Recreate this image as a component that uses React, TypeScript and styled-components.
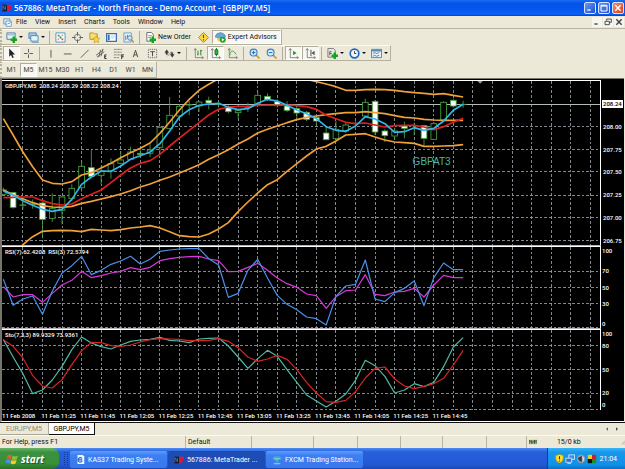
import React from "react";
import styled, { createGlobalStyle, css } from "styled-components";

const GlobalStyle = createGlobalStyle`
  * { box-sizing: border-box; }
  body { margin: 0; background: #ece9d8; font-family: Roboto, "Liberation Sans", sans-serif; font-size: 7px; line-height: 8px; color: #111; }
  button { font: inherit; color: inherit; }
`;

/* ---------- window frame ---------- */

const Shell = styled.div`
  display: flex;
  flex-direction: column;
  height: 100vh;
  min-height: 320px;
  overflow: hidden;
`;

const TitleBar = styled.header`
  display: flex;
  align-items: center;
  flex: none;
  height: 16px;
  padding: 0 1px 0 2px;
  gap: 2px;
  background: linear-gradient(#1c6cf4 0, #0353e6 20%, #0456ec 60%, #0862fc 88%, #0340c0 100%);
`;

const Title = styled.h1`
  flex: 1;
  margin: 0;
  font: 600 8px/12px "Open Sans", sans-serif;
  color: #fff;
  white-space: nowrap;
  overflow: hidden;
`;

const CaptionButton = styled.button<{ $danger?: boolean }>`
  display: flex;
  width: 12px;
  height: 12px;
  padding: 1px;
  border: 1px solid #d6e4ff;
  border-radius: 2px;
  color: #fff;
  background: ${(p) => (p.$danger ? "linear-gradient(135deg, #f09070, #d8401c)" : "linear-gradient(135deg, #6c98f4, #1c50d4)")};
`;

const MenuBar = styled.nav`
  display: flex;
  align-items: center;
  flex: none;
  height: 13px;
  padding: 0 1px 0 3px;
  border-bottom: 1px solid #b8b5a4;
`;

const MenuButton = styled.button`
  padding: 0 4px;
  border: 0;
  background: none;
`;

const Spacer = styled.div`
  flex: 1;
`;

const ChildButton = styled.button`
  display: flex;
  width: 10px;
  height: 10px;
  margin-left: 1px;
  padding: 1px;
  border: 0;
  color: #444;
  background: #f6f5ee;
`;

/* ---------- toolbars ---------- */

const Toolbar = styled.div<{ $last?: boolean }>`
  display: flex;
  align-items: center;
  align-self: flex-start;
  flex: none;
  height: ${(p) => (p.$last ? "17px" : "16px")};
  padding-left: 1px;
  border: 1px solid #fbfaf4;
  border-right-color: #b4b1a0;
  border-bottom-color: #b4b1a0;
  border-left: 2px dotted #b4b1a0;
`;

const ToolButton = styled.button<{ $on?: boolean; $menu?: boolean; $text?: boolean }>`
  display: flex;
  align-items: center;
  justify-content: center;
  flex: none;
  gap: 2px;
  width: ${(p) => (p.$text ? "auto" : p.$menu ? "22px" : "17px")};
  height: 14px;
  padding: ${(p) => (p.$text ? "0 3px 0 2px" : "0")};
  border: 1px solid transparent;
  background: none;
  white-space: nowrap;
  ${(p) =>
    p.$on &&
    css`
      border-color: #b0ad9c #fff #fff #b0ad9c;
      background: #f8f7f2;
    `}
`;

const Frame = styled(ToolButton)`
  color: #444;
`;

const Caret = styled.span`
  border: 2px solid transparent;
  border-top-color: #111;
  border-bottom: 0;
`;

const Rule = styled.span<{ $wide?: boolean }>`
  flex: none;
  width: 1px;
  height: 13px;
  margin: 0 ${(p) => (p.$wide ? "3px" : "2px")};
  background: #b0ad9c;
`;

/* ---------- chart window ---------- */

const ChartWindow = styled.main`
  display: grid;
  flex: 1;
  min-height: 0;
  grid-template-columns: minmax(0, 1fr) 23px;
  grid-template-rows: minmax(0, 166fr) minmax(0, 83fr) minmax(0, 81fr) 11px;
  margin-right: 1px;
  padding-top: 1px;
  border: solid #77756b;
  border-width: 1px 0 0 2px;
  border-bottom: 1px solid #fff;
  background: #000;
  color: #fff;
  font-size: 6px;
  font-weight: 500;
`;

const Pane = styled.section<{ $last?: boolean }>`
  position: relative;
  min-height: 0;
  border-top: 1px solid #fff;
  border-right: 1px solid #fff;
  border-bottom: ${(p) => (p.$last ? "0" : "1px solid #b8b0b8")};
  overflow: hidden;
`;

const Plot = styled.svg`
  display: block;
  width: 100%;
  height: 100%;
`;

const PaneTitle = styled.div`
  position: absolute;
  top: 1px;
  left: 3px;
  white-space: pre;
`;

const Annotation = styled.div`
  position: absolute;
  top: 46%;
  left: 69%;
  margin-left: -2px;
  font: 10px/12px "Liberation Sans", Arial, sans-serif;
  color: #48b8a4;
`;

const Scale = styled.div<{ $top?: number; $inset?: number }>`
  display: flex;
  flex-direction: column;
  min-height: 0;
  padding: ${(p) => p.$top ?? 1}px 0 1px ${(p) => p.$inset ?? 0}px;
`;

const ScaleLabel = styled.div<{ $gap: number }>`
  display: flex;
  align-items: flex-end;
  flex: ${(p) => p.$gap} 0 8px;
`;

const Mark = styled.span<{ $current?: boolean }>`
  padding: 0 1px;
  ${(p) => p.$current && css`background: #fff; color: #000;`}
`;

const TimeAxis = styled.div`
  display: grid;
  grid-template-columns: repeat(12, minmax(0, 39fr)) minmax(0, 129fr);
  grid-column: 1 / 2;
  line-height: 11px;
  white-space: nowrap;
`;

/* ---------- bottom bars ---------- */

const TabStrip = styled.div`
  display: flex;
  flex: none;
  height: 13px;
  border-top: 1px solid #111;
  padding-right: 3px;
`;

const Tab = styled.button<{ $active?: boolean }>`
  width: ${(p) => (p.$active ? "46px" : "49px")};
  padding: 0;
  border: 0;
  border-right: 1px solid ${(p) => (p.$active ? "#111" : "#aaa796")};
  border-bottom: 1px solid ${(p) => (p.$active ? "#111" : "#aaa796")};
  background: ${(p) => (p.$active ? "#fff" : "#ece9d8")};
  color: ${(p) => (p.$active ? "#000" : "#8c8a7c")};
`;

const TabArrow = styled.button`
  display: flex;
  align-items: center;
  width: 10px;
  padding: 0 3px;
  border: 0;
  background: none;
`;

const StatusBar = styled.footer`
  display: grid;
  flex: none;
  grid-template-columns: 185fr 66fr 62fr 44fr 43fr 42fr 44fr 40fr 99fr;
  height: 13px;
  border-top: 1px solid #fbfaf4;
  line-height: 12px;
`;

const StatusCell = styled.div`
  display: flex;
  align-items: center;
  min-width: 0;
  padding-left: 2px;
  gap: 20px;
  white-space: nowrap;
  & + & { border-left: 1px solid #b8b5a4; }
`;

const Taskbar = styled.div`
  display: flex;
  flex: none;
  height: 21px;
  gap: 1px;
  background: linear-gradient(#4c8cf4 0, #2860dc 18%, #2258d4 80%, #1c48b0 100%);
`;

const StartButton = styled.button`
  display: flex;
  align-items: center;
  width: 59px;
  padding: 0 0 0 6px;
  gap: 3px;
  border: 0;
  border-radius: 0 7px 7px 0;
  background: linear-gradient(#68b468 0, #3c9040 20%, #389038 75%, #287028 100%);
  color: #fff;
  font: italic bold 10px/14px "Open Sans", sans-serif;
  text-shadow: 1px 1px 1px #1c5020;
`;

const Grip = styled.span`
  width: 4px;
  margin: 4px 1px 4px 4px;
  border: dotted #143c9c;
  border-width: 0 1px;
`;

const Task = styled.button<{ $active?: boolean }>`
  display: flex;
  align-items: center;
  flex: 0 1 97px;
  min-width: 0;
  height: 17px;
  margin-top: 3px;
  padding: 0 4px 0 6px;
  gap: 3px;
  border: 0;
  border-radius: 2px;
  background: ${(p) => (p.$active ? "#1c4cb4" : "linear-gradient(#609cfc, #3c80f4 25%, #3878ec)")};
  color: #fff;
  white-space: nowrap;
`;

const Tray = styled.div`
  display: flex;
  align-items: center;
  width: 78px;
  padding: 0 8px 0 7px;
  gap: 1px;
  border-left: 1px solid #0c4094;
  background: linear-gradient(#38b4f8 0, #1898ec 20%, #1090e8 80%, #0c70c0 100%);
  color: #fff;
`;

const Glyph = styled.svg<{ $size?: number }>`
  flex: none;
  width: ${(p) => p.$size ?? 12}px;
  height: ${(p) => p.$size ?? 12}px;
`;

/* ---------- icons, all on a 12 unit grid ---------- */

const axes = <path d="M2.5 1v9.5H11M1 2.5l1.5-2 1.5 2M9.500 9l2 1.500-2 1.500" fill="none" stroke="#777" strokeWidth=".9" />;
const plus = <path d="M8.500 5v7M5 8.500h7" stroke="#18a020" strokeWidth="2.600" />;

const icons: Record<string, React.ReactNode> = {
  logo: (
    <>
      <path d="M0 2h6v8H0z" fill="#101828" />
      <path d="M1 9V3l3 5V3" stroke="#5878c8" fill="none" />
      <path d="M6 10V2h6v3H9v1h2v2H9v2z" fill="#d81840" />
    </>
  ),
  windows: (
    <>
      <path d="M1 1h8v7H1z" fill="#d8ecfc" stroke="#4888c0" />
      <path d="M4 4h7v7H4z" fill="#fff" stroke="#4888c0" />
      <path d="M5 9l2-2 1 1 2-3" stroke="#4888c0" fill="none" />
    </>
  ),
  newChart: (
    <>
      <path d="M1 1h9v7H1z" fill="#e4f0f8" stroke="#4c7ca4" />
      <path d="M2 3h7" stroke="#7cacd0" />
      {plus}
    </>
  ),
  profiles: (
    <>
      <path d="M1 1h8v6H1z" fill="#a8ccec" stroke="#4c80b0" />
      <path d="M3 4h8v6H3z" fill="#e8f4fc" stroke="#4c80b0" />
      <path d="M4 11.500h8" stroke="#7ca0c0" />
    </>
  ),
  market: (
    <>
      <path d="M1 1h10v10H1z" fill="#fff" stroke="#5090c4" />
      <path d="M3 3h2v2H3zM5 5h2v2H5z" fill="#20a040" />
      <path d="M7 7h2v2H7zM3 7h1v2H3z" fill="#e04830" />
      <path d="M7 3h2v1H7z" fill="#4888d8" />
    </>
  ),
  target: (
    <>
      <circle cx="6" cy="6" r="3.500" fill="none" stroke="#777" />
      <path d="M6 0v4M6 8v4M0 6h4M8 6h4" stroke="#555" />
    </>
  ),
  favorites: (
    <>
      <path d="M1 1h4l1 1h3v6H1z" fill="#f8e070" stroke="#c09020" />
      <path d="M8 4l1.200 2.600 2.800.3-2 2 .5 2.900L8 10.400 5.500 11.800l.5-2.900-2-2 2.800-.3z" fill="#fcd840" stroke="#b88810" strokeWidth=".6" />
    </>
  ),
  terminal: (
    <>
      <path d="M.7 1.700h10.600v8.600H.7z" fill="#fff" stroke="#3870b0" strokeWidth="1.400" />
      <path d="M2 3h2v6H2z" fill="#3870b0" />
      <path d="M5 4.500h5M5 6.500h4" stroke="#b4d0e8" />
    </>
  ),
  tester: (
    <>
      <path d="M1 1h8v10H1z" fill="#eef4fa" stroke="#6c98c0" />
      <path d="M3 9V4M5 7V3" stroke="#4878a8" />
      <circle cx="7.500" cy="6.500" r="2.500" fill="#c8e4f8" stroke="#4c80b0" />
      <path d="M9.500 8.500L12 11.500" stroke="#c09030" strokeWidth="1.600" />
    </>
  ),
  order: (
    <>
      <path d="M2 .5h5l2 2V10H2z" fill="#fff" stroke="#666" />
      <path d="M3.500 4h4M3.500 6h3" stroke="#888" />
      {plus}
    </>
  ),
  warning: (
    <>
      <path d="M6 .5L11.500 6 6 11.500.5 6z" fill="#f8d840" stroke="#b08c10" />
      <path d="M6 3v3.500M6 8v1.200" stroke="#705000" strokeWidth="1.200" />
    </>
  ),
  expert: (
    <>
      <path d="M2 6c0 5 4 5 6 4V5z" fill="#f0cc60" />
      <path d="M0 5.500q1-4.500 6-5 4 .5 6 4.500-2 2-6 1.500T0 5.500z" fill="#68a8d8" stroke="#4080b0" strokeWidth=".6" />
      <circle cx="8.500" cy="8.500" r="3.300" fill="#28a430" />
      <path d="M7.500 6.800v3.400L10.300 8.500z" fill="#fff" />
    </>
  ),
  cursor: <path d="M3.500.5v9l2-2 1.500 3.500 1.500-.7L7 7h3z" fill="#222" />,
  cross: <path d="M6 1v4M6 7v4M1 6h4M7 6h4" stroke="#555" fill="none" />,
  vline: <path d="M6.500 2v8.500" stroke="#555" />,
  hline: <path d="M2 6.500h8.500" stroke="#555" />,
  trend: <path d="M2 10.500L10.500 2" stroke="#555" />,
  channel: (
    <>
      <path d="M0 8l8-6M1 10l8-6M3 10l2-8M5.500 9l2-8" stroke="#555" fill="none" strokeWidth=".9" />
      <path d="M11.500 7.500H9.500v4h2M9.500 9.500h1.500" stroke="#222" fill="none" />
    </>
  ),
  fibo: (
    <>
      <path d="M1 1.500h9M1 4.500h9M1 7.500h9M1 10.500h6" stroke="#666" strokeDasharray="1 .5" />
      <path d="M9.500 12V7.500H12M9.500 9.500h2" stroke="#222" fill="none" />
    </>
  ),
  textA: <path d="M3.500 10L6 2.500 8.500 10M4.500 7.500h3" stroke="#444" fill="none" />,
  label: (
    <>
      <path d="M1.500 1.500h9v9h-9z" fill="none" stroke="#555" strokeDasharray="1 1" />
      <path d="M3.500 4h5M6 4v5" stroke="#444" fill="none" />
    </>
  ),
  arrows: <path d="M1 5l2-3 2 3H3.700v2H2.300V5zM7 7h1V5h1.500v2H11l-2 3zM4 9l4-5" fill="#333" stroke="#333" strokeWidth=".5" />,
  bars: (
    <>
      {axes}
      <path d="M5.500 3v5M4.500 7h1M8.500 2v6M8.500 3h1.500" stroke="#208020" fill="none" />
    </>
  ),
  candles: (
    <>
      {axes}
      <path d="M7 0v9" stroke="#107010" />
      <path d="M5.500 2h3v5h-3z" fill="#30b840" stroke="#107010" />
    </>
  ),
  line: (
    <>
      {axes}
      <path d="M3 8c1-6 4-6 7-1" stroke="#40a040" fill="none" />
    </>
  ),
  zoomIn: (
    <>
      <path d="M7.500 7.500l4 4" stroke="#d0a030" strokeWidth="2" />
      <circle cx="5" cy="5" r="3.800" fill="#d4ecfc" stroke="#3880c0" strokeWidth="1.200" />
      <path d="M5 3v4M3 5h4" stroke="#2060b0" />
    </>
  ),
  zoomOut: (
    <>
      <path d="M7.500 7.500l4 4" stroke="#d0a030" strokeWidth="2" />
      <circle cx="5" cy="5" r="3.800" fill="#d4ecfc" stroke="#3880c0" strokeWidth="1.200" />
      <path d="M3 5h4" stroke="#2060b0" />
    </>
  ),
  scroll: (
    <>
      {axes}
      <path d="M5.500 3v5l4-2.500z" fill="#20a030" />
    </>
  ),
  shift: (
    <>
      {axes}
      <path d="M6.500 2v7" stroke="#444" />
      <path d="M10.500 3v5L7 5.500z" fill="#555" />
    </>
  ),
  indicators: (
    <>
      <path d="M1 .5h6l2 2V10H1z" fill="#e8e8e4" stroke="#777" />
      <path d="M3 8V4h2M3 6h2" stroke="#555" fill="none" />
      {plus}
    </>
  ),
  clock: (
    <>
      <circle cx="6" cy="6" r="4.700" fill="#f4faff" stroke="#2068b8" strokeWidth="1.800" />
      <path d="M6 3.500V6h2" stroke="#333" fill="none" />
    </>
  ),
  template: (
    <>
      <path d="M.5 1.500h11v9H.5z" fill="#e8f2fa" stroke="#4c80ac" />
      <path d="M1 3h10" stroke="#4c80ac" strokeWidth="1.500" />
      <path d="M2 6l2-1 2 1 3-1M2 9l2-1 2 1 3-1" stroke="#5c7c94" fill="none" />
    </>
  ),
  minimize: <path d="M2 9h5" stroke="currentColor" strokeWidth="2" />,
  maximize: <path d="M1.500 2h9v8.500h-9zM1.500 3h9" stroke="currentColor" strokeWidth="1.500" fill="none" />,
  restore: <path d="M4 4V1.500h7v5H8M1.500 5h6.500v5H1.500z" stroke="currentColor" strokeWidth="1.400" fill="none" />,
  close: <path d="M2 2l8 8M10 2l-8 8" stroke="currentColor" strokeWidth="2.200" />,
  left: <path d="M9 1v10L3 6z" fill="#666" />,
  right: <path d="M3 1v10l6-5z" fill="#444" />,
  flag: (
    <>
      <path d="M1.500 2.500Q4 1 6 2.500L5 6Q3 4.500.5 6z" fill="#f05828" />
      <path d="M6.700 2.800Q9 4 11.800 2.800L10.800 6.300Q8 7.500 5.700 6.300z" fill="#80c838" />
      <path d="M.3 6.800Q3 5.500 4.800 6.800l-1 3.500Q2 9-.5 10.300z" fill="#4890f0" />
      <path d="M5.500 7Q8 8.200 10.600 7l-1 3.500Q7 12 4.500 10.500z" fill="#fcc828" />
    </>
  ),
  document: (
    <>
      <path d="M2 0h7l2 2v10H2z" fill="#f0f6ff" />
      <path d="M8 4.500a3 3 0 1 0 .3 3.500M2.500 6.500h6" stroke="#2060c8" strokeWidth="1.500" fill="none" />
    </>
  ),
  station: (
    <>
      <path d="M1 3q5-4 10 0v3H8v3H4V6H1z" fill="#40a8c8" />
      <path d="M2 10.500h8M3 4q3 2 6 0" stroke="#a8e8f0" fill="none" />
    </>
  ),
  shield: (
    <>
      <path d="M6 .5l5 1.500v4q0 4-5 6-5-2-5-6V2z" fill="#fce030" stroke="#b89410" />
      <path d="M6 3v4M6 8.500V10" stroke="#403000" strokeWidth="1.400" />
    </>
  ),
  network: (
    <>
      <path d="M4.500 1h7v5.500h-7z" fill="#4888e0" stroke="#dcecff" />
      <path d="M1 5h7v5H1z" fill="#3070d0" stroke="#dcecff" />
      <path d="M3 11.500h4" stroke="#dcecff" />
    </>
  ),
  volume: (
    <>
      <circle cx="6" cy="6" r="5" fill="#909ca8" />
      <path d="M2 5l5-3v8L4 8z" fill="#333c48" />
      <path d="M8 3q2 3 0 6" stroke="#fff" fill="none" />
    </>
  ),
  quad: (
    <>
      <path d="M1 1h5v5H1z" fill="#e8d020" />
      <path d="M6 1h5v5H6z" fill="#d02020" />
      <path d="M1 6h5v5H1z" fill="#101010" />
      <path d="M6 6h5v5H6z" fill="#189028" />
    </>
  ),
};

const Icon = ({ name, size }: { name: string; size?: number }) => (
  <Glyph viewBox="0 0 12 12" $size={size} aria-hidden="true">
    {icons[name]}
  </Glyph>
);

/* ---------- chart data: three drawing units per pixel, one sample per bar ---------- */

const STEP = 29.3;
const barX = (i: number) => 10 + i * STEP;

const upperBand = [128, 177, 228, 272, 312, 322, 324, 317, 297, 290, 276, 262, 245, 230, 217, 201, 172, 138, 102, 70, 43, 25, 8, 0, -5, -8, -10, -10, -8, -5, 0, 10, 17, 24, 32, 43, 43, 41, 40, 41, 43, 47, 50, 52, 55, 53, 58, 63];
const middleBand = [342, 356, 368, 380, 389, 393, 394, 391, 382, 376, 369, 362, 354, 344, 333, 324, 313, 303, 291, 279, 266, 250, 236, 221, 204, 189, 171, 160, 150, 140, 131, 124, 120, 116, 113, 110, 110, 107, 110, 113, 119, 124, 126, 130, 132, 133, 133, 133];
const lowerBand = [560, 535, 506, 482, 466, 464, 463, 464, 467, 460, 462, 464, 461, 456, 453, 449, 456, 467, 479, 482, 483, 474, 459, 440, 407, 378, 351, 326, 311, 286, 263, 240, 219, 211, 195, 177, 175, 173, 183, 192, 198, 200, 202, 211, 211, 210, 209, 206];
const fastAverage = [345, 358, 374, 388, 400, 406, 400, 370, 325, 303, 285, 286, 270, 250, 239, 228, 203, 165, 123, 101, 88, 84, 82, 94, 101, 98, 82, 70, 75, 88, 102, 113, 128, 152, 163, 166, 150, 122, 129, 143, 169, 167, 155, 163, 157, 135, 103, 85];
const slowAverage = [365, 364, 363, 363, 374, 383, 387, 384, 368, 355, 342, 320, 297, 276, 262, 254, 235, 210, 186, 163, 140, 117, 100, 93, 91, 91, 88, 87, 88, 87, 89, 92, 100, 118, 128, 139, 143, 141, 147, 153, 149, 148, 148, 153, 161, 152, 139, 127];
const rsiFast = [106, 184, 165, 156, 211, 142, 87, 65, 37, 92, 79, 61, 51, 37, 60, 46, 22, 18, 15, 14, 14, 44, 63, 160, 148, 79, 46, 102, 154, 181, 197, 219, 224, 243, 157, 126, 121, 48, 165, 173, 146, 133, 111, 185, 101, 57, 77, 77];
const rsiSlow = [128, 159, 152, 152, 175, 148, 123, 109, 82, 101, 95, 87, 82, 71, 77, 70, 50, 44, 40, 38, 37, 45, 50, 83, 82, 70, 58, 79, 102, 119, 130, 150, 155, 193, 158, 140, 138, 92, 151, 155, 144, 142, 133, 159, 123, 94, 101, 101];
const stoMain = [290, 342, 392, 452, 441, 411, 370, 320, 282, 300, 311, 318, 306, 295, 291, 289, 283, 292, 294, 299, 288, 286, 285, 309, 342, 376, 347, 322, 340, 380, 418, 456, 474, 492, 475, 453, 412, 352, 368, 400, 450, 441, 422, 431, 418, 371, 312, 284];
const stoSignal = [290, 310, 345, 398, 429, 435, 410, 365, 323, 298, 299, 308, 310, 306, 297, 290, 287, 288, 289, 293, 293, 292, 287, 295, 314, 342, 355, 348, 337, 349, 380, 418, 450, 476, 478, 472, 446, 405, 376, 372, 408, 429, 437, 430, 422, 406, 366, 322];

/* high, low, body top, body bottom, 1 for a falling bar */
const candles = [
  [335, 360, 342, 355, 0], [348, 398, 350, 394, 1], [372, 400, 387, 388, 0], [370, 398, 384, 385, 0],
  [378, 482, 381, 430, 1], [352, 438, 398, 427, 0], [360, 445, 363, 403, 0], [325, 375, 337, 367, 0],
  [252, 347, 271, 335, 0], [222, 303, 275, 301, 1], [268, 325, 285, 298, 0], [247, 308, 263, 285, 0],
  [225, 265, 252, 262, 0], [212, 252, 228, 250, 0], [215, 245, 232, 235, 1], [205, 243, 222, 232, 0],
  [150, 232, 154, 214, 0], [63, 160, 118, 158, 0], [85, 125, 91, 120, 0], [75, 118, 86, 87, 0],
  [75, 108, 78, 90, 0], [62, 100, 73, 81, 1], [75, 95, 84, 85, 0], [88, 112, 94, 107, 1],
  [98, 128, 104, 110, 0], [80, 108, 92, 94, 0], [45, 90, 58, 82, 0], [52, 75, 61, 71, 1],
  [70, 95, 77, 87, 1], [75, 108, 90, 103, 1], [90, 128, 98, 111, 1], [105, 135, 109, 130, 1],
  [118, 150, 125, 135, 1], [152, 193, 171, 191, 1], [135, 192, 160, 188, 0], [140, 170, 147, 165, 0],
  [135, 160, 142, 143, 0], [68, 125, 79, 120, 0], [72, 178, 76, 168, 1], [160, 198, 165, 179, 1],
  [155, 190, 165, 180, 0], [137, 187, 150, 157, 1], [140, 178, 148, 149, 0], [147, 208, 149, 187, 1],
  [138, 192, 143, 190, 0], [76, 137, 79, 132, 0], [68, 95, 73, 90, 1], [74, 95, 85, 86, 0],
];

const Series = ({ data, color, width = 3.6 }: { data: number[]; color: string; width?: number }) => (
  <polyline
    points={data.map((y, i) => `${barX(i).toFixed(1)},${y}`).join(" ")}
    fill="none"
    stroke={color}
    strokeWidth={width}
    strokeLinejoin="round"
  />
);

const Grid = ({ levels, top, bottom }: { levels: number[]; top: number; bottom: number }) => (
  <g stroke="#949ca4" strokeWidth="2.6" strokeDasharray="8 6" shapeRendering="crispEdges">
    {Array.from({ length: 30 }, (_, i) => {
      const x = 68.5 + i * STEP * 2;
      return <path key={i} d={`M${x} ${top}V${bottom}`} />;
    })}
    {levels.map((y) => (
      <path key={y} d={`M6 ${y}H1797`} />
    ))}
  </g>
);

const PricePlot = () => (
  <Plot viewBox="6 15 1791 492" preserveAspectRatio="none" role="img" aria-label="GBPJPY five minute candles">
    <Grid levels={[152.5, 220.5, 287.5, 357.5, 424.5, 493.5]} top={15} bottom={507} />
    <path d="M6 85.500H1797" stroke="#b4bcb8" strokeWidth="3" />
    {candles.map(([high, low, top, bottom, down], i) => (
      <g key={i} stroke="#48a040" strokeWidth="2.600">
        <path d={`M${barX(i)} ${high}V${top}M${barX(i)} ${bottom}V${low}`} />
        <rect x={barX(i) - 8.5} y={top} width={17} height={bottom - top} fill={down ? "#fff" : "#000"} />
      </g>
    ))}
    <path d="M1429 14h18l-9 9z" fill="#8898a4" />
    <Series data={upperBand} color="#f0a038" width={5} />
    <Series data={middleBand} color="#f0a038" width={5} />
    <Series data={lowerBand} color="#f0a038" width={5} />
    <Series data={slowAverage} color="#dc2020" width={5} />
    <Series data={fastAverage} color="#30b8ec" width={5} />
  </Plot>
);

const times = ["2008", "11:25", "11:45", "12:05", "12:25", "12:45", "13:05", "13:25", "13:45", "14:05", "14:25", "14:45"];

const Levels = ({ items }: { items: [string, number][] }) => (
  <Scale>
    {items.map(([text, gap]) => (
      <ScaleLabel key={text} $gap={gap}>
        <Mark>{text}</Mark>
      </ScaleLabel>
    ))}
  </Scale>
);

const Tool = ({ name, label, on, menu }: { name: string; label: string; on?: boolean; menu?: boolean }) => (
  <ToolButton $on={on} $menu={menu} aria-label={label} aria-pressed={on}>
    <Icon name={name} size={11} />
    {menu && <Caret />}
  </ToolButton>
);

export default function App() {
  return (
    <Shell>
      <GlobalStyle />
      <TitleBar>
        <Icon name="logo" size={10} />
        <Title>567886: MetaTrader - North Finance - Demo Account - [GBPJPY,M5]</Title>
        <CaptionButton aria-label="Minimize"><Icon name="minimize" size={8} /></CaptionButton>
        <CaptionButton aria-label="Maximize"><Icon name="maximize" size={8} /></CaptionButton>
        <CaptionButton $danger aria-label="Close"><Icon name="close" size={8} /></CaptionButton>
      </TitleBar>
      <MenuBar>
        <Icon name="windows" size={9} />
        {["File", "View", "Insert", "Charts", "Tools", "Window", "Help"].map((m) => (
          <MenuButton key={m}>{m}</MenuButton>
        ))}
        <Spacer />
        <ChildButton aria-label="Minimize chart"><Icon name="minimize" size={8} /></ChildButton>
        <ChildButton aria-label="Restore chart"><Icon name="restore" size={8} /></ChildButton>
        <ChildButton aria-label="Close chart"><Icon name="close" size={8} /></ChildButton>
      </MenuBar>

      <Toolbar role="toolbar" aria-label="Standard">
        <Tool name="newChart" label="New chart" menu />
        <Tool name="profiles" label="Profiles" menu />
        <Rule />
        <Tool name="market" label="Market watch" />
        <Tool name="target" label="Data window" />
        <Tool name="favorites" label="Navigator" />
        <Tool name="terminal" label="Terminal" />
        <Tool name="tester" label="Strategy tester" />
        <Rule />
        <ToolButton $text><Icon name="order" size={11} />New Order</ToolButton>
        <Tool name="warning" label="MetaEditor" />
        <ToolButton $text $on><Icon name="expert" size={11} />Expert Advisors</ToolButton>
      </Toolbar>

      <Toolbar role="toolbar" aria-label="Drawing and charts">
        <Tool name="cursor" label="Cursor" on />
        <Tool name="cross" label="Crosshair" />
        <Rule />
        <Tool name="vline" label="Vertical line" />
        <Tool name="hline" label="Horizontal line" />
        <Tool name="trend" label="Trendline" />
        <Tool name="channel" label="Channel" />
        <Tool name="fibo" label="Fibonacci" />
        <Tool name="textA" label="Text" />
        <Tool name="label" label="Text label" />
        <Tool name="arrows" label="Arrows" menu />
        <Rule $wide />
        <Tool name="bars" label="Bar chart" />
        <Tool name="candles" label="Candlesticks" on />
        <Tool name="line" label="Line chart" />
        <Rule />
        <Tool name="zoomIn" label="Zoom in" />
        <Tool name="zoomOut" label="Zoom out" />
        <Rule />
        <Tool name="scroll" label="Auto scroll" on />
        <Tool name="shift" label="Chart shift" on />
        <Rule />
        <Tool name="indicators" label="Indicators" menu />
        <Tool name="clock" label="Periods" menu />
        <Tool name="template" label="Templates" menu />
      </Toolbar>

      <Toolbar $last role="toolbar" aria-label="Timeframes">
        {["M1", "M5", "M15", "M30", "H1", "H4", "D1", "W1", "MN"].map((t) => (
          <Frame key={t} $on={t === "M5"} aria-pressed={t === "M5"}>{t}</Frame>
        ))}
      </Toolbar>

      <ChartWindow>
        <Pane>
          <PricePlot />
          <PaneTitle>GBPJPY,M5  208.24 208.29 208.22 208.24</PaneTitle>
          <Annotation>GBPAT3</Annotation>
        </Pane>
        <Scale $top={20} $inset={1}>
          {["208.24", "208.00", "207.75", "207.50", "207.25", "207.00", "206.75"].map((p, i) => (
            <ScaleLabel key={p} $gap={i ? 1 : 0}>
              <Mark $current={i === 0}>{p}</Mark>
            </ScaleLabel>
          ))}
        </Scale>

        <Pane>
          <Plot viewBox="6 9 1791 243" preserveAspectRatio="none" role="img" aria-label="RSI">
            <Grid levels={[82.5, 130.5, 178.5, 250.5]} top={9} bottom={252} />
            <Series data={rsiSlow} color="#d838d8" />
            <Series data={rsiFast} color="#4c90e8" />
          </Plot>
          <PaneTitle>RSI(7) 62.4208  RSI(3) 72.5794</PaneTitle>
        </Pane>
        <Levels items={[["100", 0], ["70", 12], ["50", 8], ["30", 8], ["0", 12]]} />

        <Pane $last>
          <Plot viewBox="6 261 1791 240" preserveAspectRatio="none" role="img" aria-label="Stochastic">
            <Grid levels={[307.5, 379.5, 451.5, 499.5]} top={261} bottom={501} />
            <Series data={stoMain} color="#50b8a4" />
            <Series data={stoSignal} color="#d82424" />
          </Plot>
          <PaneTitle>Sto(7,3,3) 89.9329 73.9361</PaneTitle>
        </Pane>
        <Levels items={[["100", 0], ["80", 4], ["50", 16], ["20", 16], ["0", 4]]} />

        <TimeAxis>
          {times.map((t) => (
            <span key={t}>11 Feb {t}</span>
          ))}
        </TimeAxis>
      </ChartWindow>

      <TabStrip>
        <Tab>EURJPY,M5</Tab>
        <Tab $active>GBPJPY,M5</Tab>
        <Spacer />
        <TabArrow aria-label="Previous tab"><Icon name="left" size={4} /></TabArrow>
        <TabArrow aria-label="Next tab"><Icon name="right" size={4} /></TabArrow>
      </TabStrip>

      <StatusBar>
        <StatusCell>For Help, press F1</StatusCell>
        <StatusCell>Default</StatusCell>
        <StatusCell />
        <StatusCell />
        <StatusCell />
        <StatusCell />
        <StatusCell />
        <StatusCell />
        <StatusCell>
          <svg width="15" height="8" viewBox="0 0 15 8" aria-hidden="true">
            <path d="M0 0h15v5H0z" fill="#a8b828" />
            <path d="M1.500 0v8M4.500 1v7M7.500 2v6M10.500 0v8M13.500 0v8" stroke="#103858" strokeWidth="1.500" />
          </svg>
          15/0 kb
          <Spacer />
          <svg width="8" height="10" viewBox="0 0 8 10" aria-hidden="true">
            <path d="M0 10l8-8M3 10l5-5M6 10l2-2" stroke="#a09d8c" />
          </svg>
        </StatusCell>
      </StatusBar>

      <Taskbar>
        <StartButton><Icon name="flag" size={12} />start</StartButton>
        <Grip />
        <Task><Icon name="document" size={9} />KAS37 Trading Syste...</Task>
        <Task $active><Icon name="logo" size={10} />567886: MetaTrader ...</Task>
        <Task><Icon name="station" size={10} />FXCM Trading Station...</Task>
        <Spacer />
        <Tray>
          <Icon name="shield" size={9} />
          <Icon name="network" size={10} />
          <Icon name="volume" size={10} />
          <Icon name="quad" size={10} />
          <Spacer />
          21:04
        </Tray>
      </Taskbar>
    </Shell>
  );
}
